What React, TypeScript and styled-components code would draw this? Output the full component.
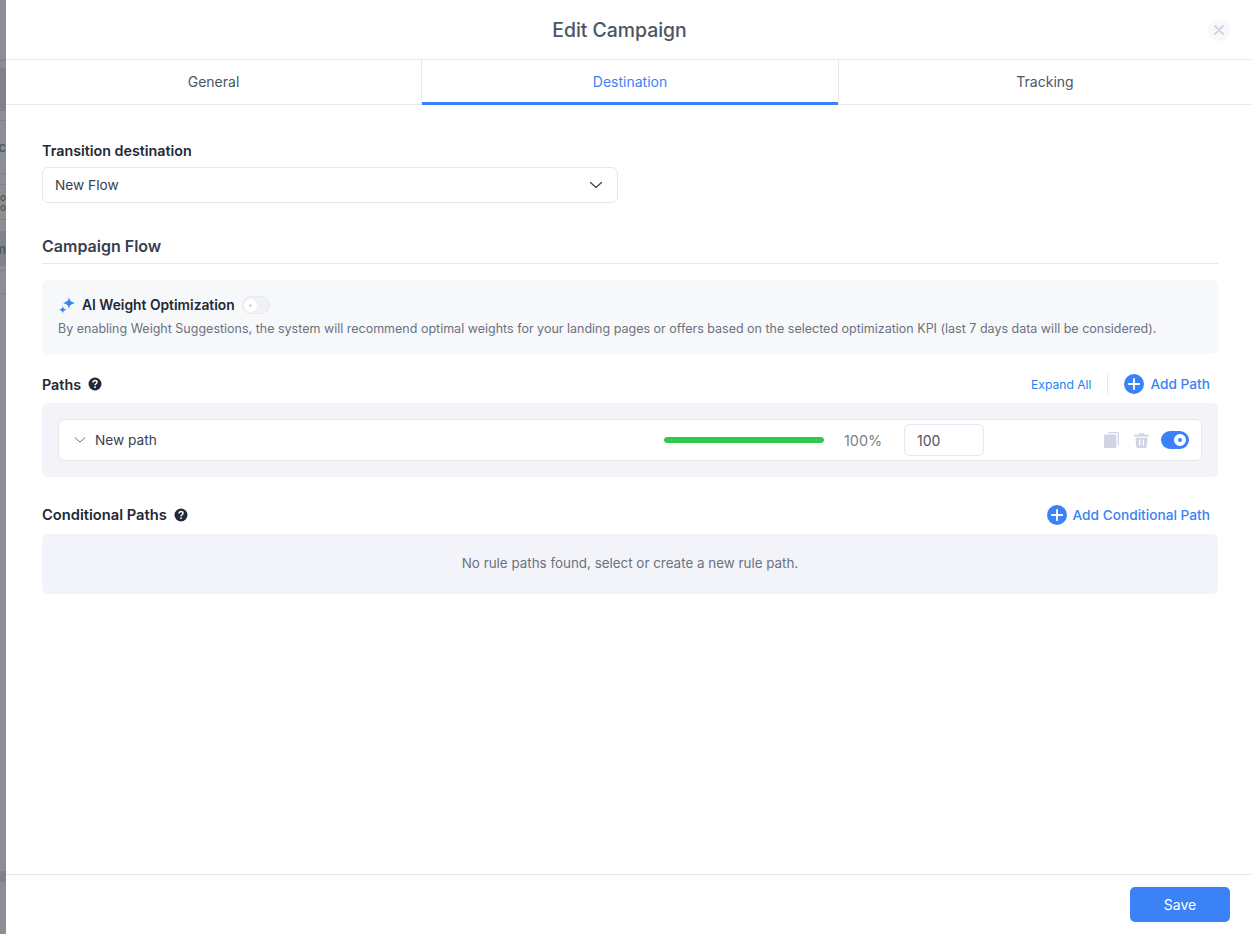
import React from "react";
import styled, { createGlobalStyle } from "styled-components";

const Global = createGlobalStyle`
  * { box-sizing: border-box; }
  html, body { margin: 0; padding: 0; background: #fff; }
  body { font-family: Inter, "Liberation Sans", sans-serif; color: #1f2937; }
`;

const Page = styled.div`
  display: flex;
  width: 1251px;
  height: 934px;
  overflow: hidden;
`;

const Backdrop = styled.div`
  width: 6px;
  flex: none;
  display: flex;
  flex-direction: column;
  overflow: hidden;
  background: #8b8e92;
`;

const Band = styled.div<{ $h: number; $bg?: string; $line?: boolean; $small?: boolean }>`
  height: ${(p) => p.$h}px;
  flex: none;
  background: ${(p) => p.$bg || "transparent"};
  border-bottom: ${(p) => (p.$line ? "1px solid #7d8084" : "none")};
  display: flex;
  align-items: center;
  justify-content: flex-end;
  font-size: ${(p) => (p.$small ? 10 : 13)}px;
  line-height: 10px;
  font-weight: 500;
  color: #50545c;
  white-space: nowrap;
  overflow: hidden;
`;

const Modal = styled.div`
  flex: 1;
  min-width: 0;
  display: flex;
  flex-direction: column;
  background: #fff;
`;

const Header = styled.header`
  height: 60px;
  flex: none;
  position: relative;
  display: flex;
  align-items: center;
  justify-content: center;
  padding-right: 18px;
  border-bottom: 1px solid #e5e7eb;
  font-size: 19.4px;
  font-weight: 500;
  color: #4b5563;
`;

const Title = styled.h1`
  margin: 0;
  font: inherit;
`;

const Close = styled.button`
  position: absolute;
  right: 21px;
  top: 19px;
  width: 22px;
  height: 22px;
  padding: 0;
  border: 0;
  border-radius: 50%;
  background: #f8f8fa;
  display: flex;
  align-items: center;
  justify-content: center;
`;

const Tabs = styled.nav`
  display: grid;
  grid-template-columns: 415px 418px 1fr;
  height: 45px;
  flex: none;
  border-bottom: 1px solid #e5e7eb;
`;

const Tab = styled.div<{ $active?: boolean }>`
  position: relative;
  display: flex;
  align-items: center;
  justify-content: center;
  font-size: 14px;
  font-weight: 400;
  padding-bottom: 1px;
  color: ${(p) => (p.$active ? "#3b82f6" : "#4b5563")};
  border-left: ${(p) => (p.$active ? "1px solid #e5e7eb" : "none")};
  border-right: ${(p) => (p.$active ? "1px solid #e5e7eb" : "none")};

  ${(p) =>
    p.$active
      ? `
    &::after {
      content: "";
      position: absolute;
      left: 0;
      right: 0;
      bottom: -1px;
      height: 3px;
      background: #3b82f6;
    }
  `
      : ""}
`;

const Content = styled.main`
  flex: 1;
  padding: 37px 33px 0 36px;
  display: flex;
  flex-direction: column;
`;

const FieldLabel = styled.label`
  font-size: 14.3px;
  line-height: 17px;
  font-weight: 600;
  color: #1f2937;
  display: block;
`;

const Select = styled.div`
  margin-top: 8px;
  width: 576px;
  height: 36px;
  border: 1px solid #e5e7eb;
  border-radius: 6px;
  display: flex;
  align-items: center;
  justify-content: space-between;
  padding: 0 14px 1px 12px;
  font-size: 13.7px;
  color: #374151;
`;

const SectionTitle = styled.h2`
  margin: 34px 0 0;
  padding-bottom: 8px;
  height: 27px;
  font-size: 16px;
  line-height: 19px;
  font-weight: 600;
  color: #374151;
  border-bottom: 1px solid #e5e7eb;
`;

const AiBox = styled.section`
  margin-top: 16px;
  height: 74px;
  border-radius: 6px;
  background: #f7f8fa;
  padding: 15px 16px 0;
`;

const AiHead = styled.div`
  display: flex;
  align-items: center;
  height: 20px;
`;

const AiTitle = styled.span`
  margin-left: 6px;
  font-size: 13.8px;
  font-weight: 600;
  color: #1f2937;
`;

const AiText = styled.p`
  margin: 6px 0 0;
  font-size: 12.5px;
  line-height: 16px;
  color: #6b7280;
  white-space: nowrap;
`;

const Toggle = styled.span<{ $on?: boolean }>`
  margin-left: ${(p) => (p.$on ? "0" : "7px")};
  width: 28px;
  height: 18px;
  flex: none;
  border-radius: 9px;
  background: ${(p) => (p.$on ? "#3b82f6" : "#f0f1f4")};
  border: ${(p) => (p.$on ? "none" : "1px solid #e8e9ed")};
  display: flex;
  align-items: center;
  justify-content: ${(p) => (p.$on ? "flex-end" : "flex-start")};
  padding: 0 ${(p) => (p.$on ? "3px" : "1px")};

  &::after {
    content: "";
    width: ${(p) => (p.$on ? "4px" : "3px")};
    height: ${(p) => (p.$on ? "4px" : "3px")};
    border-radius: 50%;
    background: ${(p) => (p.$on ? "#3b82f6" : "#d4d6dc")};
    border: ${(p) => (p.$on ? "4px" : "5px")} solid #fff;
    box-sizing: content-box;
  }
`;

const RowHead = styled.div<{ $top: number }>`
  margin-top: ${(p) => p.$top}px;
  height: 20px;
  display: flex;
  align-items: center;
  justify-content: space-between;
`;

const HeadLabel = styled.div<{ $size: number }>`
  display: flex;
  align-items: center;
  gap: 7px;
  font-size: ${(p) => p.$size}px;
  font-weight: 600;
  color: #1f2937;
`;

const Actions = styled.div`
  display: flex;
  align-items: center;
  padding-right: 8px;
`;

const TextLink = styled.span`
  font-size: 12.1px;
  color: #1d7ff2;
`;

const Divider = styled.span`
  width: 1px;
  height: 20px;
  background: #e5e7eb;
  margin: 0 16px 0 16px;
`;

const AddLink = styled.span`
  display: flex;
  align-items: center;
  gap: 6px;
  font-size: 13.7px;
  font-weight: 500;
  color: #3b82f6;
`;

const PathsBox = styled.section`
  margin-top: 9px;
  height: 74px;
  border-radius: 6px;
  background: #f2f4f9;
  padding: 16px;
`;

const PathRow = styled.div`
  height: 42px;
  background: #fff;
  border: 1px solid #e5e7eb;
  border-radius: 6px;
  display: flex;
  align-items: center;
  padding: 0 12px 0 15px;
`;

const PathName = styled.span`
  margin-left: 9px;
  width: 569px;
  font-size: 13.7px;
  color: #374151;
`;

const Progress = styled.div`
  width: 160px;
  height: 6px;
  border-radius: 3px;
  background: #e5e7eb;
  overflow: hidden;
`;

const ProgressFill = styled.div`
  height: 100%;
  background: #2fc950;
  border-radius: 3px;
`;

const Percent = styled.span`
  margin-left: 20px;
  width: 39px;
  font-size: 14.4px;
  color: #7b818c;
`;

const WeightInput = styled.div`
  margin-left: 21px;
  width: 80px;
  height: 32px;
  border: 1px solid #e5e7eb;
  border-radius: 6px;
  padding-left: 12px;
  display: flex;
  align-items: center;
  font-size: 14px;
  color: #4b5563;
`;

const RowIcons = styled.div`
  margin-left: auto;
  display: flex;
  align-items: center;
  gap: 15px;
`;

const ToggleGap = styled.span`
  display: flex;
  margin-left: -3px;
`;

const EmptyBox = styled.section`
  margin-top: 9px;
  height: 60px;
  border-radius: 6px;
  background: #f2f4f9;
  display: flex;
  align-items: center;
  justify-content: center;
  padding-bottom: 2px;
  font-size: 13.4px;
  color: #6b7280;
`;

const Footer = styled.footer`
  height: 60px;
  flex: none;
  border-top: 1px solid #e5e7eb;
  display: flex;
  justify-content: flex-end;
  align-items: flex-start;
  padding: 12px 21px 0 0;
`;

const Save = styled.button`
  width: 100px;
  height: 35px;
  border: 0;
  border-radius: 5px;
  background: #3b82f6;
  color: #fff;
  font-family: inherit;
  font-size: 14px;
  font-weight: 400;
`;

const Help = () => (
  <svg width="14" height="14" viewBox="0 0 14 14">
    <circle cx="7" cy="7" r="6.5" fill="#1f2937" />
    <path d="M5 5.4c0-1.1.9-1.8 2-1.8s2 .7 2 1.7c0 1.500-2 1.400-2 3" fill="none" stroke="#fff" strokeWidth="1.500" />
    <rect x="6.200" y="9.300" width="1.600" height="1.600" rx=".5" fill="#fff" />
  </svg>
);

const Plus = () => (
  <svg width="20" height="20" viewBox="0 0 20 20">
    <circle cx="10" cy="10" r="10" fill="#3b82f6" />
    <path d="M10 4.800v10.400M4.800 10h10.400" stroke="#fff" strokeWidth="1.800" strokeLinecap="round" />
  </svg>
);

const Sparkle = () => (
  <svg width="18" height="18" viewBox="0 0 18 18" fill="#3b82f6">
    <path d="M11 1c.6 3.600 1.800 4.900 6 6-4.200 1.100-5.400 2.400-6 6-.6-3.600-1.800-4.900-6-6 4.200-1.100 5.400-2.400 6-6z" />
    <path d="M4.800 10c.4 2.200 1.200 3 3.900 3.700-2.700.7-3.500 1.500-3.900 3.700-.4-2.200-1.200-3-3.800-3.700 2.600-.7 3.400-1.500 3.800-3.700z" />
  </svg>
);

const Chevron = ({ size, color, width }: { size: number; color: string; width: number }) => (
  <svg width={size} height={size} viewBox="0 0 14 14" fill="none">
    <path d="M1.500 4.500 7 9.500l5.500-5" stroke={color} strokeWidth={width} strokeLinecap="round" strokeLinejoin="round" />
  </svg>
);

const Copy = () => (
  <svg width="15" height="16" viewBox="0 0 15 16" fill="#d0d4e4">
    <path d="M4 0h9.500A1.500 1.500 0 0 1 15 1.500V13h-1.300V1.300H4z" />
    <rect x="0" y="2.500" width="12.300" height="13.500" rx="1.300" />
  </svg>
);

const Trash = () => (
  <svg width="15" height="15" viewBox="0 0 15 15" fill="#d0d4e4">
    <path d="M5 .3h5l.6 1.500H15v1.700H0V1.800h4.400z" />
    <path d="M1.500 4.800h12l-.7 8.700a1.500 1.500 0 0 1-1.500 1.400H3.700a1.500 1.500 0 0 1-1.500-1.400zM5 6.500v6h1.300v-6zm3.700 0v6H10v-6z" fillRule="evenodd" />
  </svg>
);

export default function App() {
  return (
    <Page>
      <Global />
      <Backdrop>
        <Band $h={61} $line />
        <Band $h={7} />
        <Band $h={43} $bg="#7f8389" />
        <Band $h={10} $line />
        <Band $h={53} $line>
          <span>ic</span>
        </Band>
        <Band $h={11} $line />
        <Band $h={7} />
        <Band $h={10} $small>
          <span>o</span>
        </Band>
        <Band $h={10} $small>
          <span>o</span>
        </Band>
        <Band $h={8} $line />
        <Band $h={11} />
        <Band $h={35} $bg="#7f8389">
          <span>m</span>
        </Band>
        <Band $h={5} $line />
        <Band $h={23} $line />
        <Band $h={577} />
        <Band $h={11} $bg="#7f8389" />
      </Backdrop>
      <Modal>
        <Header>
          <Title>Edit Campaign</Title>
          <Close aria-label="Close">
            <svg width="10" height="10" viewBox="0 0 10 10">
              <path d="M1 1l8 8M9 1l-8 8" stroke="#d0d4e4" strokeWidth="2" strokeLinecap="round" />
            </svg>
          </Close>
        </Header>
        <Tabs>
          <Tab>General</Tab>
          <Tab $active>Destination</Tab>
          <Tab>Tracking</Tab>
        </Tabs>
        <Content>
          <FieldLabel>Transition destination</FieldLabel>
          <Select>
            New Flow
            <Chevron size={14} color="#374151" width={1.2} />
          </Select>
          <SectionTitle>Campaign Flow</SectionTitle>
          <AiBox>
            <AiHead>
              <Sparkle />
              <AiTitle>AI Weight Optimization</AiTitle>
              <Toggle />
            </AiHead>
            <AiText>
              By enabling Weight Suggestions, the system will recommend optimal weights for your landing pages or offers based on the selected optimization KPI (last 7 days data will be considered).
            </AiText>
          </AiBox>
          <RowHead $top={20}>
            <HeadLabel $size={14.3}>
              Paths <Help />
            </HeadLabel>
            <Actions>
              <TextLink>Expand All</TextLink>
              <Divider />
              <AddLink>
                <Plus />
                Add Path
              </AddLink>
            </Actions>
          </RowHead>
          <PathsBox>
            <PathRow>
              <Chevron size={12} color="#4b5563" width={1} />
              <PathName>New path</PathName>
              <Progress>
                <ProgressFill style={{ width: "100%" }} />
              </Progress>
              <Percent>100%</Percent>
              <WeightInput>100</WeightInput>
              <RowIcons>
                <Copy />
                <Trash />
                <ToggleGap>
                  <Toggle $on />
                </ToggleGap>
              </RowIcons>
            </PathRow>
          </PathsBox>
          <RowHead $top={28}>
            <HeadLabel $size={14.7}>
              Conditional Paths <Help />
            </HeadLabel>
            <Actions>
              <AddLink>
                <Plus />
                Add Conditional Path
              </AddLink>
            </Actions>
          </RowHead>
          <EmptyBox>No rule paths found, select or create a new rule path.</EmptyBox>
        </Content>
        <Footer>
          <Save>Save</Save>
        </Footer>
      </Modal>
    </Page>
  );
}
